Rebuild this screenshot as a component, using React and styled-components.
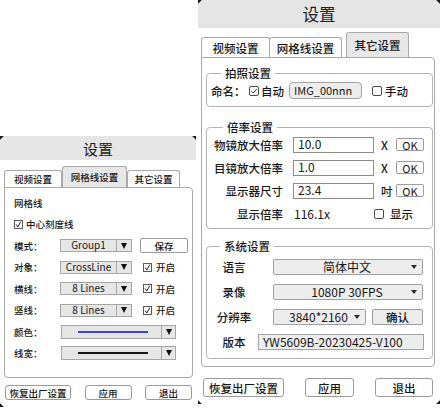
import React from 'react';
import styled, { createGlobalStyle } from 'styled-components';

const GlobalStyle = createGlobalStyle`
  html, body { margin: 0; padding: 0; background: #fff; }
  body {
    font-family: "Noto Sans CJK SC", "Noto Sans", sans-serif;
    color: #161616;
  }
  * { box-sizing: border-box; }
`;

const Page = styled.div`
  display: flex;
  align-items: flex-start;
  gap: 2px;
  width: 440px;
  height: 409px;
  overflow: hidden;
`;

const Dialog = styled.div`
  position: relative;
  flex: none;
  display: flex;
  flex-direction: column;
  width: ${p => p.$w}px;
  height: ${p => p.$h}px;
  margin-top: ${p => p.$top || 0}px;
  background: #fff;
`;

// little dark marks left on the rounded window corners
const Corner = styled.span`
  position: absolute;
  width: 4px;
  height: 4px;
  ${p => p.$v}: 0;
  ${p => p.$side}: 0;
  background: linear-gradient(${p => p.$deg}deg, #1a1a1a 40%, transparent 55%);
`;

const TitleBar = styled.div`
  flex: none;
  height: ${p => p.$h}px;
  display: flex;
  align-items: center;
  justify-content: center;
  background: #e5e5e5;
  font-size: ${p => p.$fs}px;
  color: #202020;
`;

const TabRow = styled.div`
  flex: none;
  display: flex;
  align-items: flex-end;
  height: ${p => p.$h}px;
  padding-left: ${p => p.$pl}px;
`;

const Tab = styled.div`
  flex: none;
  width: ${p => p.$w}px;
  height: ${p => p.$h}px;
  margin-left: ${p => p.$ml || 0}px;
  display: flex;
  align-items: center;
  justify-content: center;
  border: 1px solid #a9a9a9;
  border-bottom: none;
  border-radius: 3px 3px 0 0;
  background: ${p => (p.$active ? '#e7e7e7' : '#fff')};
  font-size: ${p => p.$fs}px;
  font-weight: 500;
`;

const Panel = styled.div`
  flex: none;
  display: flex;
  flex-direction: column;
  height: ${p => p.$h}px;
  margin: 0 ${p => p.$mr}px 0 ${p => p.$ml}px;
  padding: ${p => p.$pad};
  gap: ${p => p.$gap || 0}px;
  border: 1px solid #a9a9a9;
  border-radius: 0 4px 4px 4px;
`;

const ButtonBar = styled.div`
  flex: none;
  display: flex;
  justify-content: space-between;
  margin-top: ${p => p.$mt}px;
  padding: 0 ${p => p.$pr}px 0 ${p => p.$pl}px;
`;

const Button = styled.div`
  flex: none;
  width: ${p => p.$w}px;
  height: ${p => p.$h}px;
  margin-left: ${p => p.$ml || 0}px;
  display: flex;
  align-items: center;
  justify-content: center;
  border: 1px solid #9b9b9b;
  border-radius: ${p => p.$r || 3}px;
  background: ${p => (p.$gray ? '#ececec' : '#fdfdfd')};
  font-size: ${p => p.$fs}px;
  font-weight: ${p => p.$weight || 500};
`;

/* ---------- small (grid line) dialog ---------- */

const SRow = styled.div`
  display: flex;
  align-items: center;
  height: 15px;
  font-size: 9.5px;
  font-weight: 500;
`;

const SLabel = styled.span`
  flex: none;
  width: 46px;
`;

const Combo = styled.div`
  flex: none;
  display: grid;
  grid-template-columns: 1fr ${p => p.$aw}px;
  width: ${p => p.$w}px;
  height: ${p => p.$h}px;
  margin-left: ${p => p.$ml || 0}px;
  border: 1px solid #a6a6a6;
  background: #e6e6e6;
`;

const ComboText = styled.span`
  display: flex;
  align-items: center;
  justify-content: center;
  padding-bottom: 1px;
  border-right: 1px solid #a6a6a6;
  font-size: 10px;
  font-weight: 400;
  line-height: 1;
`;

const ComboArrow = styled.span`
  display: flex;
  align-items: center;
  justify-content: center;
  &::after {
    content: '';
    border-left: 3.5px solid transparent;
    border-right: 3.5px solid transparent;
    border-top: 6px solid #111;
  }
`;

const SwatchCell = styled.span`
  display: flex;
  align-items: center;
  border-right: 1px solid #a6a6a6;
`;

const Swatch = styled.span`
  display: block;
  width: 70px;
  height: 2px;
  margin-left: 16px;
  background: ${p => p.$c};
`;

const TickBox = styled.span`
  flex: none;
  display: inline-flex;
  width: 9px;
  height: 9px;
  margin: 0 ${p => p.$mr || 3}px 0 ${p => p.$ml || 0}px;
  border: 1px solid #5a5a5a;
  background: #fff;
`;

function Tick({ ml, mr }) {
  return (
    <TickBox $ml={ml} $mr={mr}>
      <svg width="7" height="7" viewBox="0 0 7 7">
        <polyline points="1.2,3.6 2.8,6 5.8,0.6" fill="none" stroke="#111" strokeWidth="0.9" />
      </svg>
    </TickBox>
  );
}

function SmallSelect({ label, value, on }) {
  return (
    <SRow>
      <SLabel>{label}</SLabel>
      <Combo $w={72} $h={13} $aw={14}>
        <ComboText>{value}</ComboText>
        <ComboArrow />
      </Combo>
      <Tick ml={11} mr={4} />
      {on}
    </SRow>
  );
}

function SmallLine({ label, color }) {
  return (
    <SRow>
      <SLabel>{label}</SLabel>
      <Combo $w={115} $h={14} $aw={13} $ml={1}>
        <SwatchCell>
          <Swatch $c={color} />
        </SwatchCell>
        <ComboArrow />
      </Combo>
    </SRow>
  );
}

function GridDialog() {
  return (
    <Dialog $w={196} $h={271} $top={136}>
      <Corner $v="top" $side="left" $deg={135} />
      <Corner $v="top" $side="right" $deg={225} />
      <Corner $v="bottom" $side="left" $deg={45} />
      <TitleBar $h={24} $fs={15}>设置</TitleBar>
      <TabRow $h={27} $pl={4}>
        <Tab $w={58} $h={17} $fs={9.5}>视频设置</Tab>
        <Tab $w={65} $h={21} $fs={9.5} $active>网格线设置</Tab>
        <Tab $w={53} $h={17} $fs={9.5}>其它设置</Tab>
      </TabRow>
      <Panel $h={191} $ml={4} $mr={3} $pad="7px 6px 0 9px" $gap={6.5}>
        <SRow>网格线</SRow>
        <SRow>
          <Tick />
          中心刻度线
        </SRow>
        <SRow>
          <SLabel>模式：</SLabel>
          <Combo $w={72} $h={13} $aw={14}>
            <ComboText>Group1</ComboText>
            <ComboArrow />
          </Combo>
          <Button $w={48} $h={15} $r={2} $ml={8} $fs={9.5}>保存</Button>
        </SRow>
        <SmallSelect label="对象：" value="CrossLine" on="开启" />
        <SmallSelect label="横线：" value="8 Lines" on="开启" />
        <SmallSelect label="竖线：" value="8 Lines" on="开启" />
        <SmallLine label="颜色：" color="#3a45d2" />
        <SmallLine label="线宽：" color="#151515" />
      </Panel>
      <ButtonBar $mt={7} $pl={5} $pr={4}>
        <Button $w={66} $h={15} $fs={9.5}>恢复出厂设置</Button>
        <Button $w={47} $h={15} $fs={9.5}>应用</Button>
        <Button $w={47} $h={15} $fs={9.5}>退出</Button>
      </ButtonBar>
    </Dialog>
  );
}

/* ---------- large (other settings) dialog ---------- */

const Group = styled.fieldset`
  flex: none;
  min-width: 0;
  margin: 0 0 ${p => p.$mb || 0}px;
  padding: ${p => p.$pad};
  border: 1px solid #b3b3b3;
  border-radius: 4px;
  display: flex;
  flex-direction: column;
  gap: ${p => p.$gap || 0}px;
`;

const Legend = styled.legend`
  margin-left: 10px;
  padding: 0 4px;
  font-size: 11.5px;
  line-height: 14px;
  font-weight: 500;
`;

const Row = styled.div`
  display: flex;
  align-items: center;
  height: ${p => p.$h || 17}px;
  font-size: 11.5px;
  font-weight: 500;
`;

const Label = styled.span`
  flex: none;
  width: ${p => p.$w}px;
  text-align: ${p => p.$align || 'left'};
`;

const Value = styled.span`
  flex: none;
  width: ${p => p.$w}px;
  padding-left: 11px;
  font-size: 12px;
  font-weight: 400;
`;

const Field = styled.div`
  flex: none;
  display: flex;
  align-items: center;
  width: ${p => p.$w}px;
  height: ${p => p.$h}px;
  margin-left: ${p => p.$ml || 0}px;
  padding: 0 0 1px 4px;
  border: 1px solid ${p => (p.$gray ? '#a3a3a3' : '#8c8c8c')};
  border-radius: ${p => p.$r || 0}px;
  background: ${p => (p.$gray ? '#ededed' : '#fff')};
  font-size: ${p => p.$fs || 12}px;
  font-weight: 400;
  line-height: 1;
  white-space: nowrap;
  overflow: hidden;
`;

const Unit = styled.span`
  flex: none;
  width: 22px;
  padding-left: 7px;
  font-size: 11.5px;
`;

const Box = styled.span`
  flex: none;
  display: inline-flex;
  align-items: center;
  justify-content: center;
  width: 10px;
  height: 10px;
  margin: 0 ${p => p.$mr || 2}px 0 ${p => p.$ml || 0}px;
  border: 1px solid #4a4a4a;
  border-radius: 2px;
  background: #fff;
`;

function Check({ checked, ml, mr }) {
  return (
    <Box $ml={ml} $mr={mr}>
      {checked && (
        <svg width="8" height="8" viewBox="0 0 8 8">
          <polyline points="1.5,4.2 3.3,6 6.6,2.2" fill="none" stroke="#222" strokeWidth="1" />
        </svg>
      )}
    </Box>
  );
}

const Select = styled.div`
  flex: none;
  display: grid;
  grid-template-columns: 1fr 12px;
  align-items: center;
  width: ${p => p.$w}px;
  height: 16px;
  margin-left: ${p => p.$ml || 0}px;
  padding: 0 2px 1px 12px;
  border: 1px solid #a0a0a0;
  border-radius: 2px;
  background: #ededed;
  font-size: 12px;
  font-weight: 400;
  line-height: 1;
  text-align: center;
  &::after {
    content: '';
    justify-self: center;
    border-left: 3px solid transparent;
    border-right: 3px solid transparent;
    border-top: 4px solid #2a2a2a;
  }
`;

function MagRow({ label, value, unit }) {
  return (
    <Row>
      <Label $w={70} $align="right">{label}</Label>
      <Field $w={81} $h={16} $ml={10}>{value}</Field>
      <Unit>{unit}</Unit>
      <Button $w={28} $h={13} $r={2} $fs={11} $weight={400}>OK</Button>
    </Row>
  );
}

function SysRow({ label, children }) {
  return (
    <Row $h={18}>
      <Label $w={48} $align="center">{label}</Label>
      {children}
    </Row>
  );
}

function OtherDialog() {
  return (
    <Dialog $w={242} $h={404}>
      <Corner $v="top" $side="left" $deg={135} />
      <Corner $v="top" $side="right" $deg={225} />
      <Corner $v="bottom" $side="left" $deg={45} />
      <Corner $v="bottom" $side="right" $deg={315} />
      <TitleBar $h={28} $fs={16.5}>设置</TitleBar>
      <TabRow $h={29} $pl={3}>
        <Tab $w={69} $h={20} $fs={11.5}>视频设置</Tab>
        <Tab $w={73} $h={20} $fs={11.5} $ml={-1}>网格线设置</Tab>
        <Tab $w={63} $h={25} $fs={11.5} $ml={4} $active>其它设置</Tab>
      </TabRow>
      <Panel $h={310} $ml={3} $mr={5} $pad="8px 1px 0 4px">
        <Group $mb={13} $pad="2px 0 7px 4px">
          <Legend>拍照设置</Legend>
          <Row>
            <Label $w={38}>命名：</Label>
            <Check checked ml={0} mr={2} />
            自动
            <Field $w={73} $h={17} $ml={5} $r={4} $fs={11} $gray>IMG_00nnn</Field>
            <Check ml={10} mr={3} />
            手动
          </Row>
        </Group>
        <Group $mb={10} $pad="2px 0 6px 6px" $gap={6}>
          <Legend>倍率设置</Legend>
          <MagRow label="物镜放大倍率" value="10.0" unit="X" />
          <MagRow label="目镜放大倍率" value="1.0" unit="X" />
          <MagRow label="显示器尺寸" value="23.4" unit="吋" />
          <Row>
            <Label $w={70} $align="right">显示倍率</Label>
            <Value $w={91}>116.1x</Value>
            <Check mr={6} />
            显示
          </Row>
        </Group>
        <Group $pad="5px 0 7px 3px" $gap={7}>
          <Legend>系统设置</Legend>
          <SysRow label="语言">
            <Select $w={150} $ml={15}>简体中文</Select>
          </SysRow>
          <SysRow label="录像">
            <Select $w={150} $ml={15}>1080P 30FPS</Select>
          </SysRow>
          <SysRow label="分辨率">
            <Select $w={93} $ml={15}>3840*2160</Select>
            <Button $w={51} $h={16} $r={2} $ml={6} $fs={11.5} $gray>确认</Button>
          </SysRow>
          <SysRow label="版本">
            <Field $w={166} $h={16} $gray>YW5609B-20230425-V100</Field>
          </SysRow>
        </Group>
      </Panel>
      <ButtonBar $mt={11} $pl={5} $pr={7}>
        <Button $w={81} $h={19} $fs={11.5}>恢复出厂设置</Button>
        <Button $w={49} $h={19} $fs={11.5}>应用</Button>
        <Button $w={58} $h={19} $fs={11.5}>退出</Button>
      </ButtonBar>
    </Dialog>
  );
}

export default function App() {
  return (
    <>
      <GlobalStyle />
      <Page>
        <GridDialog />
        <OtherDialog />
      </Page>
    </>
  );
}
